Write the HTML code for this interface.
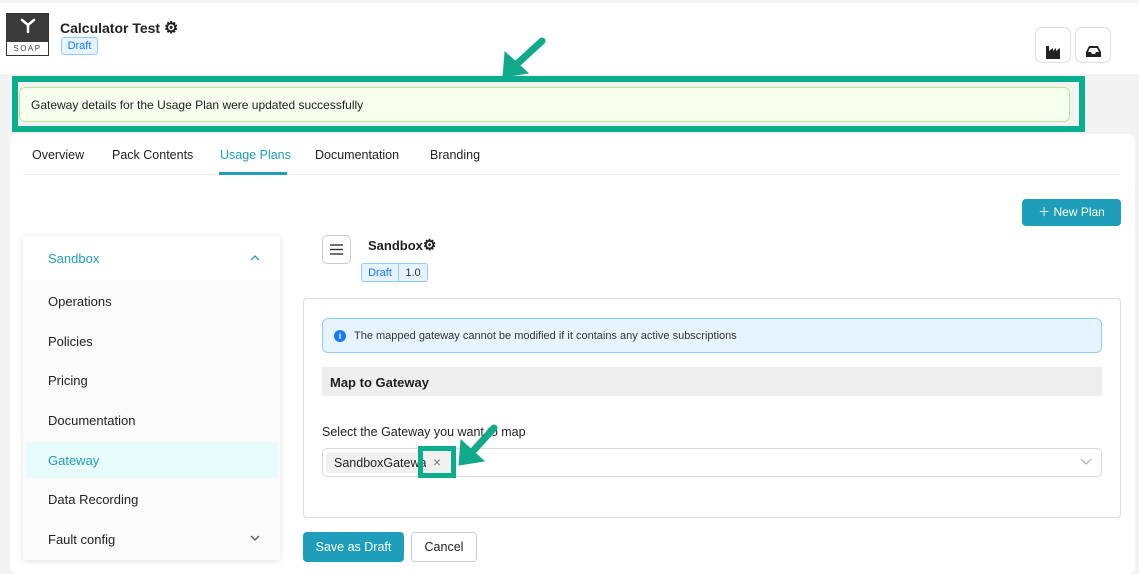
<!DOCTYPE html>
<html><head><style>
*{box-sizing:border-box;margin:0;padding:0}
body{width:1139px;height:570px;overflow:hidden;background:#f3f3f3;font-family:"Liberation Sans",sans-serif;color:#1f1f1f;position:relative;font-size:13px}
.a{position:absolute}
.badge{border:1px solid #91caff;background:#e6f4ff;color:#1677ff;font-size:11px;border-radius:3px;display:flex;align-items:center;justify-content:center}
.item{position:absolute;left:48px;font-size:13px;color:#222}
</style></head><body>
<div class="a" style="left:0;top:3px;width:1139px;height:71px;background:#fff"></div>
<div class="a" style="left:6px;top:13px;width:43px;height:43px;background:#3a3a3a;border:1px solid #333"></div>
<div class="a" style="left:7px;top:42px;width:41px;height:13px;background:#fff;font-size:8px;letter-spacing:1.5px;text-align:center;line-height:13px;color:#444">SOAP</div>
<svg class="a" style="left:18px;top:16px" width="20" height="20" viewBox="0 0 20 20"><g stroke="#fff" stroke-width="2.5" stroke-linecap="round"><line x1="4" y1="4" x2="10" y2="9"/><line x1="16" y1="4" x2="10" y2="9"/><line x1="10" y1="9" x2="10" y2="16"/></g></svg>
<div class="a" style="left:60px;top:18px;font-weight:bold;font-size:14px;color:#222">Calculator Test <span style="font-size:16px">⚙</span></div>
<div class="a badge" style="left:61px;top:37px;width:37px;height:18px">Draft</div>
<div class="a" style="left:1035px;top:27px;width:36px;height:36px;border:1px solid #ddd;border-radius:7px;background:#fff"></div>
<svg class="a" style="left:1045px;top:43px" width="16" height="16"><path d="M1 16V3h3v5l4-3v3l3-3v3l4-3v11z" fill="#222"/></svg>
<div class="a" style="left:1075px;top:27px;width:36px;height:36px;border:1px solid #ddd;border-radius:7px;background:#fff"></div>
<svg class="a" style="left:1085px;top:44px" width="17" height="14"><path d="M1 13V8l3-6h9l3 6v5zM3 8h3l1 2h3l1-2h3l-2-4H5z" fill="#222"/></svg>

<div class="a" style="left:10px;top:134px;width:1125px;height:440px;background:#fff;border-radius:8px"></div>
<div class="a" style="left:12px;top:76px;width:1073px;height:56px;border:6px solid #0aae8c;background:#f3f3f3"></div>
<div class="a" style="left:19px;top:87px;width:1051px;height:35px;background:#f6ffed;border:1px solid #b7eb8f;border-radius:6px;font-size:12px;line-height:35px;padding-left:11px;color:#222">Gateway details for the Usage Plan were updated successfully</div>

<div class="a" style="left:32px;top:148px;font-size:12.5px">Overview</div>
<div class="a" style="left:112px;top:148px;font-size:12.5px">Pack Contents</div>
<div class="a" style="left:220px;top:148px;font-size:12.5px;color:#1f9ebc">Usage Plans</div>
<div class="a" style="left:315px;top:148px;font-size:12.5px">Documentation</div>
<div class="a" style="left:430px;top:148px;font-size:12.5px">Branding</div>
<div class="a" style="left:23px;top:174px;width:1097px;height:1px;background:#eee"></div>
<div class="a" style="left:219px;top:172px;width:68px;height:3px;background:#1f9ebc"></div>

<div class="a" style="left:1022px;top:199px;width:99px;height:27px;background:#1f9ebc;border-radius:4px;color:#fff;font-size:12px;line-height:27px;text-align:center">＋ New Plan</div>

<div class="a" style="left:23px;top:236px;width:257px;height:324px;background:#fafafa;box-shadow:0 1px 6px rgba(0,0,0,.12)"></div>
<div class="a" style="left:23px;top:236px;width:257px;height:44px;background:#fff"></div>
<div class="item" style="top:251px;color:#1f9ebc">Sandbox</div>
<svg class="a" style="left:250px;top:254px" width="10" height="8"><path d="M1 6l4-4 4 4" stroke="#1f9ebc" fill="none" stroke-width="1.3"/></svg>
<div class="item" style="top:294px">Operations</div>
<div class="item" style="top:334px">Policies</div>
<div class="item" style="top:373px">Pricing</div>
<div class="item" style="top:413px">Documentation</div>
<div class="a" style="left:27px;top:442px;width:250px;height:36px;background:#e8fbfb"></div>
<div class="item" style="top:453px;color:#1f9ebc">Gateway</div>
<div class="item" style="top:492px">Data Recording</div>
<div class="item" style="top:532px">Fault config</div>
<svg class="a" style="left:250px;top:534px" width="10" height="8"><path d="M1 2l4 4 4-4" stroke="#555" fill="none" stroke-width="1.3"/></svg>

<div class="a" style="left:322px;top:235px;width:29px;height:29px;border:1px solid #ccc;border-radius:5px;background:#fff"></div>
<svg class="a" style="left:329px;top:243px" width="15" height="13"><g stroke="#333" stroke-width="1.4"><line x1="1" y1="2" x2="14" y2="2"/><line x1="1" y1="6.5" x2="14" y2="6.5"/><line x1="1" y1="11" x2="14" y2="11"/></g></svg>
<div class="a" style="left:368px;top:236px;font-weight:bold;font-size:13px">Sandbox<span style="font-size:15px">⚙</span></div>
<div class="a badge" style="left:361px;top:263px;width:38px;height:19px;border-radius:3px 0 0 3px">Draft</div>
<div class="a badge" style="left:399px;top:263px;width:29px;height:19px;border-left:none;border-radius:0 3px 3px 0;color:#333">1.0</div>

<div class="a" style="left:303px;top:298px;width:818px;height:220px;border:1px solid #ddd;border-radius:4px;background:#fff"></div>
<div class="a" style="left:322px;top:318px;width:780px;height:35px;background:#e6f4ff;border:1px solid #91caff;border-radius:6px;font-size:11px;line-height:35px;padding-left:31px;color:#333">The mapped gateway cannot be modified if it contains any active subscriptions</div>
<div class="a" style="left:334px;top:330px;width:12px;height:12px;border-radius:50%;background:#1677ff;color:#fff;font-size:9px;font-weight:bold;text-align:center;line-height:12px">i</div>
<div class="a" style="left:322px;top:367px;width:780px;height:29px;background:#eee;font-weight:bold;font-size:13px;line-height:31px;padding-left:8px">Map to Gateway</div>
<div class="a" style="left:322px;top:425px;font-size:12.5px;color:#222">Select the Gateway you want to map</div>
<div class="a" style="left:322px;top:448px;width:780px;height:29px;border:1px solid #d9d9d9;border-radius:5px;background:#fff"></div>
<div class="a" style="left:326px;top:452px;width:123px;height:21px;background:#f0f0f0;border-radius:3px;font-size:12.5px;line-height:23px;padding-left:8px">SandboxGateway</div>
<div class="a" style="left:418px;top:446px;width:38px;height:32px;border:5px solid #0aae8c"></div>
<div class="a" style="left:426px;top:451px;width:22px;height:22px;background:#f0f0f0;color:#777;font-size:14px;text-align:center;line-height:22px">×</div>
<svg class="a" style="left:1080px;top:457px" width="12" height="9"><path d="M1 2l5 5 5-5" stroke="#aaa" fill="none" stroke-width="1.2"/></svg>

<div class="a" style="left:303px;top:532px;width:101px;height:30px;background:#1f9ebc;border-radius:4px;color:#fff;font-size:12.5px;line-height:31px;text-align:center">Save as Draft</div>
<div class="a" style="left:411px;top:532px;width:66px;height:30px;border:1px solid #ccc;border-radius:4px;background:#fff;font-size:12.5px;line-height:29px;text-align:center">Cancel</div>

<svg class="a" style="left:0;top:0" width="1139" height="570">
<g fill="#10a98a" stroke="#10a98a" stroke-linecap="round">
<line x1="542" y1="41" x2="518" y2="63" stroke-width="7"/>
<polygon points="503,77 505,52 528,73" stroke-width="1"/>
<line x1="494" y1="428" x2="474" y2="450" stroke-width="7"/>
<polygon points="459,465 461,440 484,461" stroke-width="1"/>
</g></svg>
</body></html>
